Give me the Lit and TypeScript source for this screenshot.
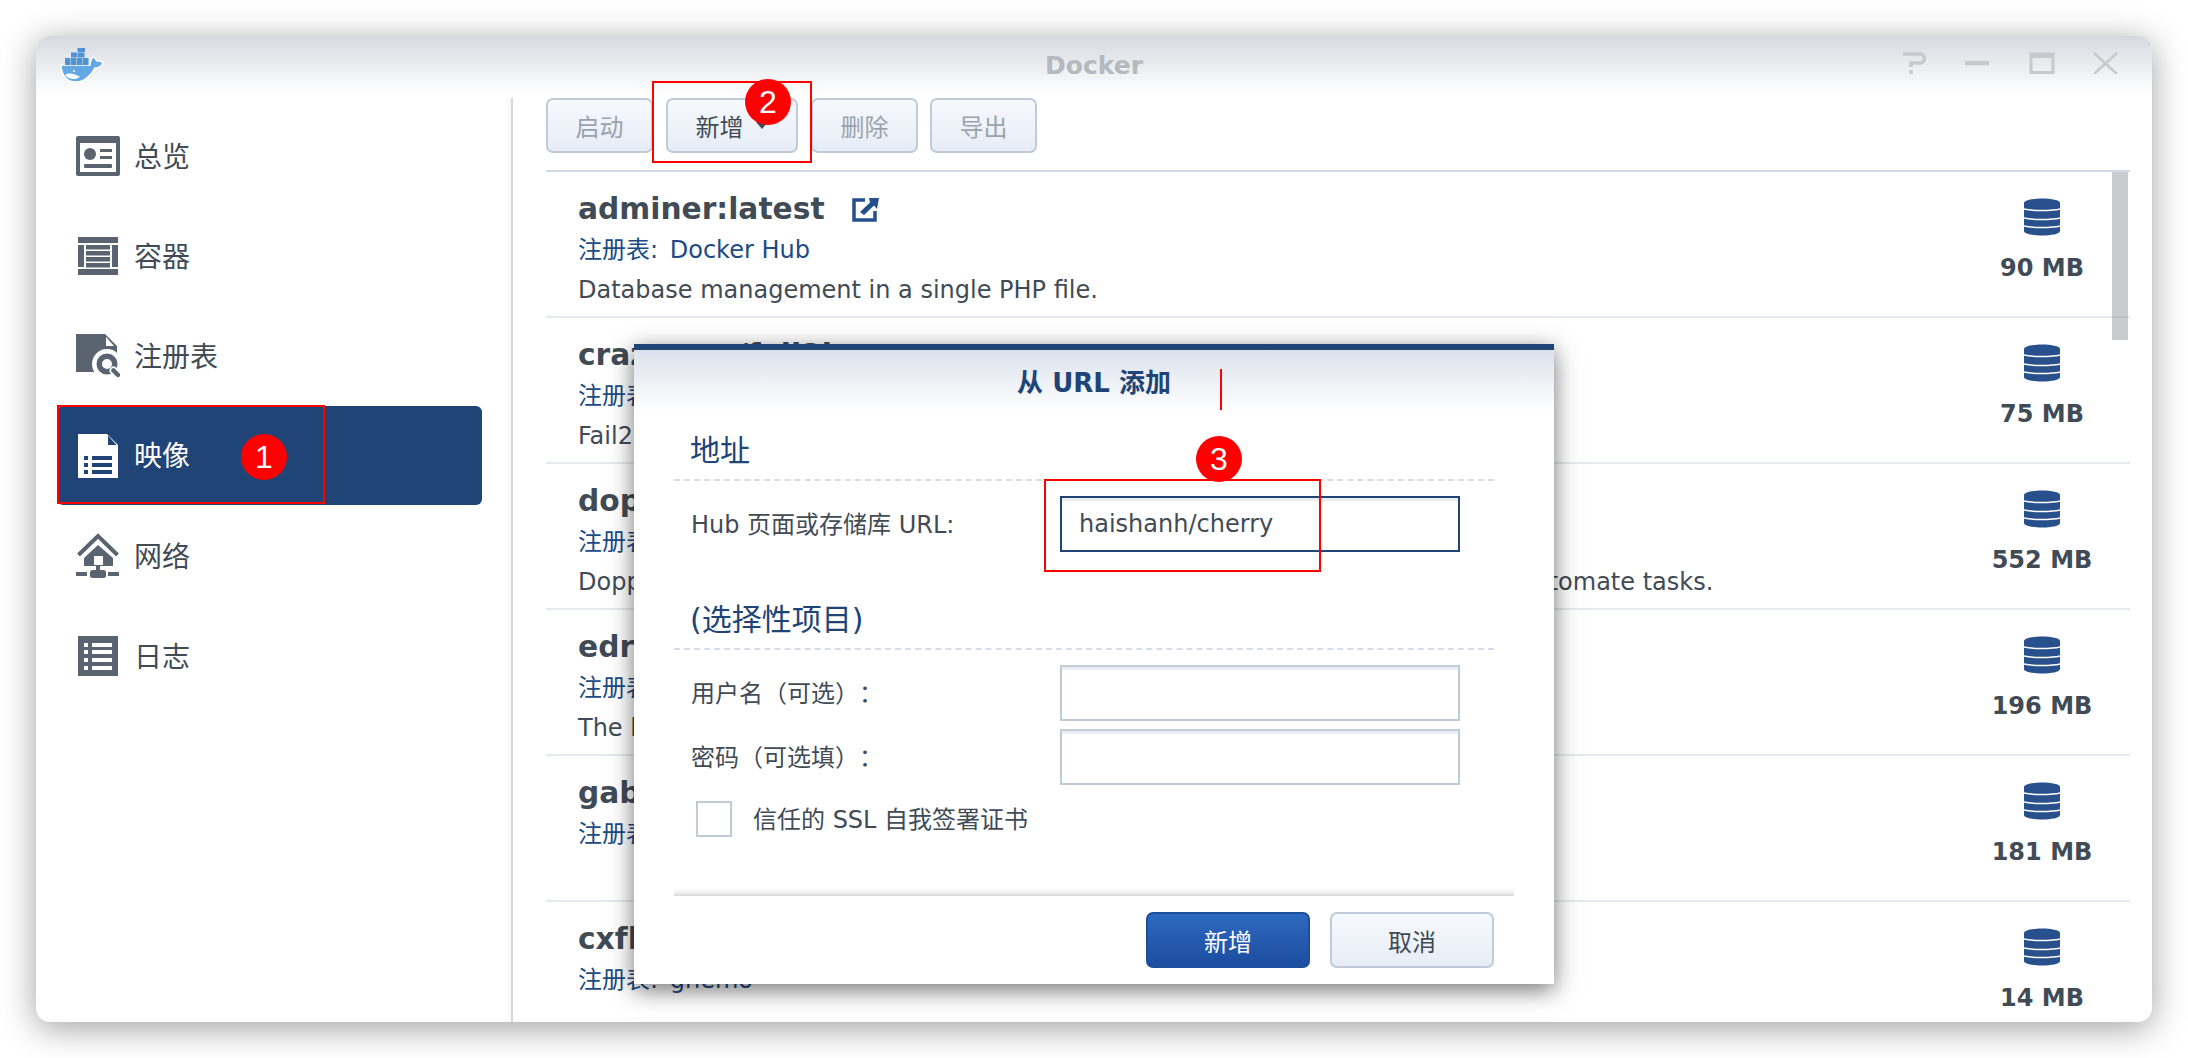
import { LitElement, html, css, svg } from 'lit';
import { customElement } from 'lit/decorators.js';

const images = [
  { name: 'adminer:latest', link: true, registry: 'Docker Hub', desc: 'Database management in a single PHP file.', size: '90 MB' },
  { name: 'crazymax/fail2ban', registry: 'Docker Hub', desc: 'Fail2ban running in a container', size: '75 MB' },
  { name: 'doppler:latest', registry: 'Docker Hub', desc: 'Doppler is an open source server that watches your containers and helps you automate tasks.', size: '552 MB' },
  { name: 'edrlab/thorium:latest', registry: 'Docker Hub', desc: 'The lightweight web reader', size: '196 MB' },
  { name: 'gabrielecirulli/2048:latest', registry: 'Docker Hub', desc: '', size: '181 MB' },
  { name: 'cxfksword/demo:latest', registry: 'gnemo', desc: '', size: '14 MB' },
];

const dark = '#5a6470';

const overviewIcon = svg`<svg width="44" height="40" viewBox="0 0 44 40">
  <rect width="44" height="40" rx="2" fill="${dark}"/>
  <rect x="4" y="7" width="36" height="29" fill="#fff"/>
  <circle cx="14" cy="18" r="6" fill="${dark}"/>
  <rect x="24" y="13" width="12" height="3" fill="${dark}"/>
  <rect x="24" y="20" width="12" height="3" fill="${dark}"/>
  <rect x="8" y="28" width="28" height="4" rx="1" fill="${dark}"/>
</svg>`;

const containerIcon = svg`<svg width="40" height="38" viewBox="0 0 40 38">
  <g fill="${dark}">
    <rect width="40" height="6"/>
    <rect y="32" width="40" height="6"/>
    <rect y="8" width="6" height="22"/>
    <rect x="34" y="8" width="6" height="22"/>
    <rect x="8" y="8" width="24" height="4.500"/>
    <rect x="8" y="14" width="24" height="4.500"/>
    <rect x="8" y="20" width="24" height="4.500"/>
    <rect x="8" y="26" width="24" height="4.500"/>
  </g>
</svg>`;

const registryIcon = svg`<svg width="44" height="44" viewBox="0 0 44 44">
  <path d="M0 0H29L41 12V38H0Z" fill="${dark}"/>
  <path d="M30 3L38 12H30Z" fill="#fff"/>
  <circle cx="31" cy="30" r="15" fill="#fff"/>
  <circle cx="31" cy="30" r="7.750" fill="none" stroke="${dark}" stroke-width="5.500"/>
  <path d="M37.500 36.500L42 41" stroke="#fff" stroke-width="8" stroke-linecap="round"/>
  <path d="M37.500 36.500L42 41" stroke="${dark}" stroke-width="4.500" stroke-linecap="round"/>
</svg>`;

const imageIcon = svg`<svg width="40" height="44" viewBox="0 0 40 44">
  <path d="M0 0H29L40 11V44H0Z" fill="#fff"/>
  <path d="M30 1.500L38.500 11H30Z" fill="#204476"/>
  <g fill="#204476">
    <rect x="6" y="22" width="4" height="4"/>
    <rect x="6" y="29" width="4" height="4"/>
    <rect x="6" y="36" width="4" height="4"/>
    <rect x="14" y="22" width="20" height="4"/>
    <rect x="14" y="29" width="20" height="4"/>
    <rect x="14" y="36" width="20" height="4"/>
  </g>
</svg>`;

const networkIcon = svg`<svg width="44" height="46" viewBox="0 0 44 46">
  <path d="M2.500 22L22 3L41.500 22" fill="none" stroke="${dark}" stroke-width="4"/>
  <path d="M22 12L37 25V33H8V25Z" fill="${dark}"/>
  <rect x="18" y="23" width="9" height="9" fill="#fff"/>
  <rect x="20" y="32" width="4" height="6" fill="${dark}"/>
  <rect x="0" y="39" width="11" height="4" fill="${dark}"/>
  <rect x="32" y="39" width="11" height="4" fill="${dark}"/>
  <rect x="14" y="37" width="16" height="8" rx="2.500" fill="${dark}"/>
</svg>`;

const logIcon = svg`<svg width="40" height="40" viewBox="0 0 40 40">
  <rect width="40" height="40" fill="${dark}"/>
  <g fill="#fff">
    <rect x="6" y="7" width="4" height="4"/>
    <rect x="6" y="14" width="4" height="4"/>
    <rect x="6" y="22" width="4" height="4"/>
    <rect x="6" y="30" width="4" height="4"/>
    <rect x="14" y="7" width="20" height="4"/>
    <rect x="14" y="14" width="20" height="4"/>
    <rect x="14" y="22" width="20" height="4"/>
    <rect x="14" y="30" width="20" height="4"/>
  </g>
</svg>`;

const nav = [
  { label: '总览', icon: overviewIcon },
  { label: '容器', icon: containerIcon },
  { label: '注册表', icon: registryIcon },
  { label: '映像', icon: imageIcon, active: true },
  { label: '网络', icon: networkIcon },
  { label: '日志', icon: logIcon },
];

// drawn in the 60x44 box around the whale
const dockerLogo = svg`<svg width="60" height="44" viewBox="0 0 60 44">
  <path d="M9 23H38C38 20 39 17 41 14C43 16 44 18 45 19C47 18.500 49 19 51 21C49 25 46 26 43 26C39 34 31 40 24 40C14 40 9 32 9 23Z" fill="#62a8e2" stroke="#fff" stroke-width="1.500"/>
  <path d="M13 33C17 30 23 32 28 35C24 38 17 38 13 33Z" fill="#fff"/>
  <g fill="#4f93d2">
    <rect x="13" y="16" width="5.500" height="7"/><rect x="19" y="16" width="5.500" height="7"/>
    <rect x="25" y="16" width="5.500" height="7"/><rect x="31" y="16" width="5.500" height="7"/>
    <rect x="19" y="10.500" width="6.500" height="5"/><rect x="26" y="10.500" width="6.500" height="5"/>
    <rect x="25.500" y="6" width="7.500" height="4"/>
  </g>
  <circle cx="22" cy="29" r="1" fill="#fff"/>
</svg>`;

const linkIcon = svg`<svg width="27" height="24" viewBox="0 0 27 24">
  <path d="M13 2H2V22H23V13" fill="none" stroke="#244e8c" stroke-width="3.500"/>
  <path d="M17 0H27L25 11L22 7.500L12 17L8 14L18 4.500Z" fill="#244e8c"/>
</svg>`;

const dbIcon = svg`<svg width="36" height="38" viewBox="0 0 36 38">
  <path d="M0 5C0 -1 36 -1 36 5V33C36 39 0 39 0 33Z" fill="#28508c"/>
  <g fill="none" stroke="#fff" stroke-width="1.500">
    <path d="M0 11C8 13 28 13 36 11"/>
    <path d="M0 20C8 22 28 22 36 20"/>
    <path d="M0 28C8 30 28 30 36 28"/>
  </g>
</svg>`;

const controls = svg`<svg width="216" height="22" viewBox="0 0 216 22">
  <g fill="none" stroke="#c6c9cd">
    <path d="M0 2H17C23 2 23 11 17 11H8V15" stroke-width="3.500"/>
    <path d="M8 18V22" stroke-width="3.500"/>
    <path d="M62 11H86" stroke-width="4.500"/>
    <rect x="128" y="2" width="22" height="18.500" stroke-width="3"/>
    <rect x="127" y="1" width="24" height="5" fill="#c6c9cd" stroke="none"/>
    <path d="M191 1L214 22M214 1L191 22" stroke-width="2.500"/>
  </g>
</svg>`;

@customElement('app-root')
export class AppRoot extends LitElement {
  static styles = css`
    :host {
      display: block;
      height: 1058px;
      overflow: hidden;
      font-family: 'DejaVu Sans', 'Noto Sans CJK SC', sans-serif;
      color: #414b55;
      text-spacing-trim: space-all;
    }
    .screen {
      position: relative;
      height: 1058px;
      overflow: hidden;
      background: #fff;
      padding: 36px 36px 36px;
      box-sizing: border-box;
    }
    .window {
      height: 986px;
      display: flex;
      flex-direction: column;
      background: #fff;
      border-radius: 14px;
      overflow: hidden;
      box-shadow: 0 6px 34px rgba(0, 0, 0, 0.38);
    }
    .titlebar {
      height: 58px;
      flex: none;
      display: grid;
      grid-template-columns: 1fr auto 1fr;
      align-items: center;
      padding: 0 33px;
      background: linear-gradient(#d5d9df, #fff);
    }
    .titlebar .logo {
      display: flex;
      margin: -2px 0 0 -17px;
    }
    .titlebar .title {
      font-size: 25px;
      font-weight: 700;
      color: #b5bac0;
    }
    .titlebar .ctrl {
      display: flex;
      justify-content: flex-end;
      margin-top: -4px;
    }
    .body {
      flex: 1;
      display: flex;
      min-height: 0;
    }
    .sidebar {
      width: 477px;
      flex: none;
      box-sizing: border-box;
      padding: 8px 29px 0 21px;
      border-right: 2px solid #d5d7da;
      box-shadow: inset -6px 0 6px -6px rgba(0, 0, 0, 0.08);
      margin-top: 4px;
    }
    .nav-item {
      height: 100px;
      display: flex;
      align-items: center;
      box-sizing: border-box;
      padding-left: 19px;
      font-size: 28px;
      border-radius: 6px;
      color: #414b55;
    }
    .nav-item.active {
      background: #204476;
      color: #fff;
      height: 99px;
      margin-bottom: 1px;
    }
    .nav-label {
      margin-top: -3px;
    }
    .nav-icon {
      width: 44px;
      flex: none;
      display: flex;
      justify-content: center;
      margin-right: 14px;
    }
    .main {
      flex: 1;
      min-width: 0;
      display: flex;
      flex-direction: column;
      padding: 4px 22px 0 33px;
    }
    .toolbar {
      display: flex;
      gap: 13px;
      height: 55px;
      margin-bottom: 17px;
      flex: none;
    }
    .btn {
      box-sizing: border-box;
      height: 55px;
      padding: 0 27.5px;
      border: 2px solid #bfcbd9;
      border-radius: 7px;
      background: linear-gradient(#f6f9fe, #e7edf6);
      font-size: 24px;
      display: flex;
      align-items: center;
      color: #414b55;
    }
    .btn.off {
      color: #9aa3ad;
    }
    .toolbar .btn:last-child {
      margin-left: -1px;
    }
    .caret {
      width: 0;
      height: 0;
      margin-left: 12px;
      margin-right: 1px;
      border-left: 6px solid transparent;
      border-right: 6px solid transparent;
      border-top: 7px solid #414b55;
    }
    .list {
      position: relative;
      flex: 1;
      min-height: 0;
      overflow: hidden;
      border-top: 2px solid #d0dae6;
    }
    .row {
      height: 146px;
      box-sizing: border-box;
      display: flex;
      justify-content: space-between;
      border-bottom: 2px solid #e6eaf0;
    }
    .info {
      padding: 18px 0 0 32px;
      min-width: 0;
      white-space: nowrap;
    }
    .name {
      font-size: 29.7px;
      line-height: 38px;
      font-weight: 700;
      margin-bottom: 2px;
      display: flex;
      align-items: center;
      gap: 27px;
    }
    .link {
      display: flex;
      margin-top: 2px;
    }
    .reg,
    .desc {
      font-size: 24px;
      line-height: 40px;
    }
    .reg {
      color: #204a84;
    }
    .reg span {
      margin-right: 4px;
    }
    .size {
      width: 140px;
      margin-right: 18px;
      flex: none;
      padding-top: 26px;
      display: flex;
      flex-direction: column;
      align-items: center;
    }
    .size svg {
      display: block;
    }
    .size b {
      font-size: 24px;
      line-height: 40px;
      margin-top: 12px;
      white-space: nowrap;
    }
    .thumb {
      position: absolute;
      right: 2px;
      top: 0;
      width: 16px;
      height: 168px;
      background: rgba(120, 128, 136, 0.4);
    }

    .dialog {
      position: absolute;
      left: 634px;
      top: 344px;
      width: 920px;
      height: 640px;
      display: flex;
      flex-direction: column;
      background: #fff;
      border-top: 6px solid #204476;
      box-sizing: border-box;
      box-shadow: 0 6px 22px rgba(0, 0, 0, 0.55);
    }
    .dlg-title {
      height: 62px;
      flex: none;
      display: flex;
      align-items: center;
      justify-content: center;
      background: linear-gradient(#dbe2ec, #fff);
      color: #204476;
      font-size: 26px;
      font-weight: 700;
      padding-bottom: 2px;
      box-sizing: border-box;
    }
    .dlg-body {
      margin: 0 40px;
      width: 820px;
      padding-top: 19px;
    }
    .section {
      height: 48px;
      padding-left: 16px;
      font-size: 30px;
      line-height: 40px;
      color: #204476;
      border-bottom: 2px dashed #d5dde8;
    }
    .section.second {
      margin-top: 48px;
    }
    .field {
      display: grid;
      grid-template-columns: 386px 400px;
      align-items: center;
      padding-left: 17px;
      font-size: 24px;
      margin-top: 8px;
    }
    .section + .field {
      margin-top: 15px;
    }
    .field span {
      margin-top: -3px;
    }
    .field input {
      height: 56px;
      width: 400px;
      margin: 0 0 0 -17px;
      box-sizing: border-box;
      border: 2px solid #c0cbd8;
      padding: 0 17px;
      font: 24px 'DejaVu Sans', 'Noto Sans CJK SC', sans-serif;
      color: #414b55;
      outline: none;
      box-shadow: inset 0 3px 0 #eceef1;
      border-radius: 0;
    }
    .field input.focus {
      border-color: #204476;
    }
    .check {
      display: flex;
      align-items: center;
      gap: 21px;
      margin: 16px 0 0 22px;
      font-size: 24px;
    }
    .check span:last-child {
      margin-top: -3px;
    }
    .box {
      width: 36px;
      height: 36px;
      box-sizing: border-box;
      border: 2px solid #c0cbd8;
    }
    .dlg-foot {
      margin: 51px 0 0 40px;
      width: 840px;
      height: 8px;
      background: linear-gradient(#fff, #f2f2f2 55%, #d8d8d8);
      flex: none;
    }
    .dlg-actions {
      display: flex;
      justify-content: flex-end;
      gap: 20px;
      padding: 16px 60px 0 0;
    }
    .dlg-actions .btn {
      width: 164px;
      height: 56px;
      justify-content: center;
      padding: 0;
    }
    .dlg-actions .btn.primary {
      border-color: #1c4f9e;
      background: linear-gradient(#2f69c0, #1b4d9f);
      color: #fff;
    }

    .mark {
      position: absolute;
      box-sizing: border-box;
      border: 2px solid #f00;
    }
    .badge {
      position: absolute;
      width: 46px;
      height: 46px;
      border-radius: 50%;
      background: #f00;
      color: #fff;
      font: 32px 'Liberation Sans', sans-serif;
      display: flex;
      align-items: center;
      justify-content: center;
    }
    .tick {
      position: absolute;
      left: 1220px;
      top: 369px;
      width: 2px;
      height: 41px;
      background: #f00;
    }
  `;

  render() {
    return html`
      <div class="screen">
        <div class="window">
          <div class="titlebar">
            <div class="logo">${dockerLogo}</div>
            <div class="title">Docker</div>
            <div class="ctrl">${controls}</div>
          </div>
          <div class="body">
            <div class="sidebar">
              ${nav.map(n => html`
                <div class="nav-item ${n.active ? 'active' : ''}">
                  <span class="nav-icon">${n.icon}</span><span class="nav-label">${n.label}</span>
                </div>
              `)}
            </div>
            <div class="main">
              <div class="toolbar">
                <div class="btn off">启动</div>
                <div class="btn">新增<span class="caret"></span></div>
                <div class="btn off">删除</div>
                <div class="btn off">导出</div>
              </div>
              <div class="list">
                ${images.map(r => html`
                  <div class="row">
                    <div class="info">
                      <div class="name">${r.name}${r.link ? html`<span class="link">${linkIcon}</span>` : ''}</div>
                      <div class="reg"><span>注册表:</span> ${r.registry}</div>
                      <div class="desc">${r.desc}</div>
                    </div>
                    <div class="size">${dbIcon}<b>${r.size}</b></div>
                  </div>
                `)}
                <div class="thumb"></div>
              </div>
            </div>
          </div>
        </div>

        <div class="dialog">
          <div class="dlg-title">从 URL 添加</div>
          <div class="dlg-body">
            <div class="section">地址</div>
            <div class="field">
              <span>Hub 页面或存储库 URL:</span>
              <input class="focus" value="haishanh/cherry" />
            </div>
            <div class="section second">(选择性项目)</div>
            <div class="field"><span>用户名（可选）：</span><input /></div>
            <div class="field"><span>密码（可选填）：</span><input /></div>
            <div class="check"><span class="box"></span><span>信任的 SSL 自我签署证书</span></div>
          </div>
          <div class="dlg-foot"></div>
          <div class="dlg-actions">
            <div class="btn primary">新增</div>
            <div class="btn">取消</div>
          </div>
        </div>

        <div class="mark" style="left:57px;top:405px;width:268px;height:99px"></div>
        <div class="badge" style="left:241px;top:434px">1</div>
        <div class="mark" style="left:652px;top:81px;width:160px;height:82px"></div>
        <div class="badge" style="left:745px;top:79px">2</div>
        <div class="tick"></div>
        <div class="mark" style="left:1044px;top:479px;width:277px;height:93px"></div>
        <div class="badge" style="left:1196px;top:436px">3</div>
      </div>
    `;
  }
}
